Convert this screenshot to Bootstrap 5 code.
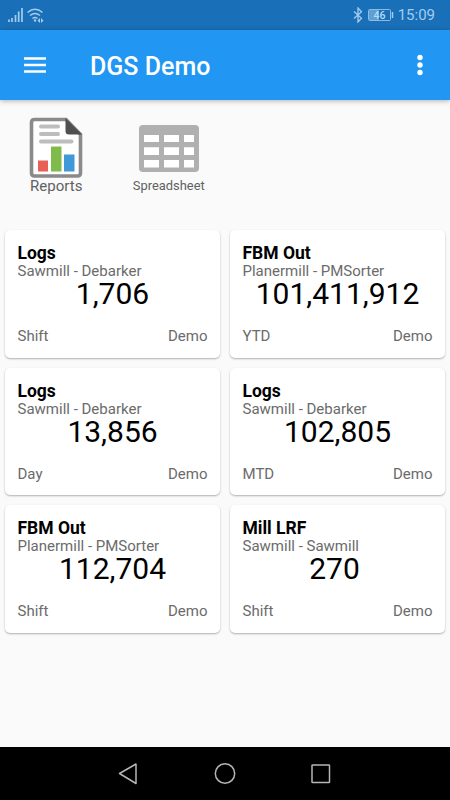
<!DOCTYPE html>
<html lang="en">
<head>
<meta charset="utf-8">
<meta name="viewport" content="width=device-width, initial-scale=1">
<title>DGS Demo</title>
<link href="https://cdn.jsdelivr.net/npm/bootstrap@5.3.0/dist/css/bootstrap.min.css" rel="stylesheet">
<style>
body{font-family:Roboto,"Liberation Sans",sans-serif;background:#fafafa;height:800px;line-height:1;overflow:hidden}
svg{display:block;flex:none}
.status-bar{height:30px;background:#1a70b8;color:#a3cdee;padding:0 15px 0 8px;font-size:15px}
.status-time{margin-left:3px}
.app-bar{height:70px;background:#2196f3;padding:0 20px 0 23px;box-shadow:0 1px 5px rgba(0,0,0,.3);z-index:1}
.app-title{font-size:25px;font-weight:500;margin-left:43px;line-height:30px;padding-top:3px}
.shortcuts{height:130px;color:#616161}
.shortcut{width:112.5px}
.shortcut svg{overflow:visible}
.reports-label{font-size:15px;line-height:18px}
.sheet-label{font-size:12.9px;line-height:16px}
.tiles{padding:0 5px;display:grid;grid-template-columns:1fr 1fr;gap:10px}
.tile{height:127.5px;border-radius:5px;padding:13px 12.5px 12.5px;box-shadow:0 1px 2px rgba(0,0,0,.3);font-size:15px;color:#6b6b6b}
.tile-title{font-size:17.5px;font-weight:700;line-height:20px;color:#000}
.tile-source{line-height:17px}
.tile-value{font-size:30px;line-height:27px;color:#000}
.tile-value-unit{padding-right:6px}
.tile-foot{line-height:18px}
.nav-keys{height:53px;background:#000;padding:0 119px 0 117px}
</style>
<script src="https://cdn.jsdelivr.net/npm/bootstrap@5.3.0/dist/js/bootstrap.bundle.min.js"></script>
</head>
<body class="d-flex flex-column">
<div class="status-bar d-flex align-items-center flex-shrink-0">
  <svg width="38" height="20" viewBox="0 0 38 20" fill="none" stroke="currentColor">
    <path d="M1 17v-2.500M4 17v-4M7.500 17v-7M10.700 17V6.500M14 17V3" stroke-width="1.700"/>
    <path d="M19.500 7.500q7.500-6.500 15 0M22 10.500q5-4 10 0M24.500 13.500q2.500-2 5 0" stroke-width="1.500"/>
    <circle cx="27" cy="15.500" r="1.200" fill="currentColor" stroke="none"/>
    <path d="M29.500 15.500 32 13v5zM35.500 15.500 33 13v5z" fill="currentColor" stroke="none"/>
  </svg>
  <svg class="ms-auto" width="10" height="16" viewBox="0 0 9 16" fill="none" stroke="currentColor" stroke-width="1.300"><path d="M.5 4.500 8 11.300 4.500 15V1L8 4.700.5 11.500"/></svg>
  <svg class="ms-1" width="28" height="14" viewBox="0 0 28 14">
    <rect x="2" y="2" width="10" height="10" fill="#5f9fd2"/>
    <rect x="1.500" y="1.500" width="22" height="11" rx="1" fill="none" stroke="#8abce4"/>
    <path d="M25.500 4v6" stroke="currentColor" stroke-width="1.500"/>
    <text x="12.500" y="10.800" text-anchor="middle" font-size="10.500" font-weight="500" fill="#b9dcf6">46</text>
  </svg>
  <span class="status-time">15:09</span>
</div>
<header class="app-bar d-flex align-items-center flex-shrink-0 text-white position-relative">
  <svg width="24" height="18" viewBox="0 0 24 18" stroke="#fff" stroke-width="2.300"><path d="M1 2.500h22M1 9h22M1 15.500h22"/></svg>
  <h1 class="app-title mb-0">DGS Demo</h1>
  <svg class="ms-auto" width="20" height="22" viewBox="0 0 20 22" fill="#fff"><circle cx="10" cy="3.500" r="2.700"/><circle cx="10" cy="11" r="2.700"/><circle cx="10" cy="18.500" r="2.700"/></svg>
</header>
<nav class="shortcuts d-flex flex-shrink-0">
  <div class="shortcut d-flex flex-column align-items-center">
    <svg width="54" height="77" viewBox="29 99.500 54 77">
      <path d="M34 119h32l14.500 15v38.500q0 3-3 3H34.500q-3 0-3-3V122q0-3 3-3z" fill="#fff" stroke="#8a8a8a" stroke-width="3.600"/>
      <path d="M65.500 117.500 82 134H69q-3.500 0-3.500-3.500z" fill="#505050"/>
      <path d="M41 126h17M41 133.500h17M41 141h30.500" stroke="#bdbdbd" stroke-width="4" stroke-linecap="round"/>
      <path fill="#e86055" d="M38 160h10v11H38z"/><path fill="#7fbb4b" d="M51 146h10.500v25H51z"/><path fill="#3f98d7" d="M64 154h10.500v17H64z"/>
    </svg>
    <span class="reports-label">Reports</span>
  </div>
  <div class="shortcut d-flex flex-column align-items-center">
    <svg width="60" height="78" viewBox="139 100 60 78">
      <rect x="139" y="125" width="60" height="47" rx="4" fill="#b0b0b0"/>
      <path fill="#fff" d="M144 135h15v7h-15zM164 135h15v7h-15zM184 135h10v7h-10zM144 147.300h15v7.700h-15zM164 147.300h15v7.700h-15zM184 147.300h10v7.700h-10zM144 160h15v7.500h-15zM164 160h15v7.500h-15zM184 160h10v7.500h-10z"/>
    </svg>
    <span class="sheet-label">Spreadsheet</span>
  </div>
</nav>
<main class="tiles flex-grow-1 align-content-start">
  <section class="tile bg-white d-flex flex-column"><div class="tile-title">Logs</div><div class="tile-source">Sawmill - Debarker</div><div class="tile-value text-center">1,706</div><div class="tile-foot d-flex justify-content-between mt-auto"><span>Shift</span><span>Demo</span></div></section>
  <section class="tile bg-white d-flex flex-column"><div class="tile-title">FBM Out</div><div class="tile-source">Planermill - PMSorter</div><div class="tile-value text-center">101,411,912</div><div class="tile-foot d-flex justify-content-between mt-auto"><span>YTD</span><span>Demo</span></div></section>
  <section class="tile bg-white d-flex flex-column"><div class="tile-title">Logs</div><div class="tile-source">Sawmill - Debarker</div><div class="tile-value text-center">13,856</div><div class="tile-foot d-flex justify-content-between mt-auto"><span>Day</span><span>Demo</span></div></section>
  <section class="tile bg-white d-flex flex-column"><div class="tile-title">Logs</div><div class="tile-source">Sawmill - Debarker</div><div class="tile-value text-center">102,805</div><div class="tile-foot d-flex justify-content-between mt-auto"><span>MTD</span><span>Demo</span></div></section>
  <section class="tile bg-white d-flex flex-column"><div class="tile-title">FBM Out</div><div class="tile-source">Planermill - PMSorter</div><div class="tile-value text-center">112,704</div><div class="tile-foot d-flex justify-content-between mt-auto"><span>Shift</span><span>Demo</span></div></section>
  <section class="tile bg-white d-flex flex-column"><div class="tile-title">Mill LRF</div><div class="tile-source">Sawmill - Sawmill</div><div class="tile-value tile-value-unit text-center">270</div><div class="tile-foot d-flex justify-content-between mt-auto"><span>Shift</span><span>Demo</span></div></section>
</main>
<footer class="nav-keys d-flex align-items-center justify-content-between flex-shrink-0">
  <svg width="22" height="24" viewBox="0 0 22 24" fill="none" stroke="#b5b5b5" stroke-width="1.500" stroke-linejoin="round"><path d="M2.500 11.500 19 2v19.500z"/></svg>
  <svg width="22" height="22" viewBox="0 0 22 22" fill="none" stroke="#b5b5b5" stroke-width="1.500"><circle cx="11" cy="10.500" r="9.700"/></svg>
  <svg width="20" height="20" viewBox="0 0 20 20" fill="none" stroke="#b5b5b5" stroke-width="1.500"><rect x="1" y="1" width="17.500" height="17.500" rx=".5"/></svg>
</footer>
</body>
</html>
